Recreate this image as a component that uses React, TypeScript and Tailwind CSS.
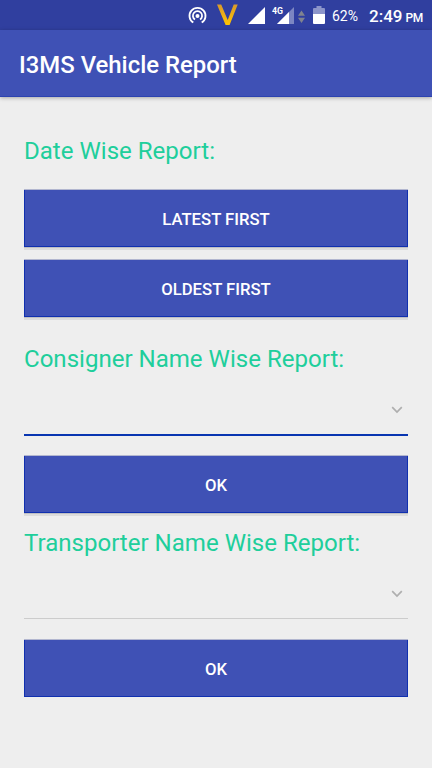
import type { ReactNode } from 'react'

function StatusBar() {
  return (
    <div className="flex h-[30px] items-center bg-[#303f9f] pl-[188px] text-white">
      <svg width="118" height="30" viewBox="188 0 118 30" className="shrink-0">
        {/* hotspot */}
        <g fill="none" stroke="#fff" strokeWidth="1.8">
          <path d="M193.3 22.6a8 8 0 1 1 8.4 0" />
          <path d="M195 19.6a4.6 4.6 0 1 1 5 0" />
        </g>
        <circle cx="197.5" cy="16" r="2" fill="#fff" />
        <defs>
          <linearGradient id="gold" x1="0" y1="0" x2="0" y2="1">
            <stop offset="0" stopColor="#d99a2b" />
            <stop offset="1" stopColor="#ffc400" />
          </linearGradient>
        </defs>
        <path d="M217 4.5h4.2l6.5 15.5 6-15.5h4L229.6 25h-4z" fill="url(#gold)" />
        {/* signal strength */}
        <path d="M265 7v17h-17z" fill="#fff" />
        <path d="M294 7v17h-17z" fill="#7c86c2" />
        <path d="M289 12v12h-12z" fill="#fff" />
        <text x="272" y="14.3" fill="#fff" fontSize="9.5" fontWeight="700" textLength="11" lengthAdjust="spacingAndGlyphs" fontFamily="Roboto, sans-serif">4G</text>
        <path d="M301.5 10.5l3.5 5.3h-7zM301.5 23l3.5-5.3h-7z" fill="#80838f" />
      </svg>
      <svg width="12" height="18" viewBox="0 0 12 18" className="ml-[7px] shrink-0">
        <path d="M3.5 0h5v2H11a1 1 0 0 1 1 1v5H0V3a1 1 0 0 1 1-1h2.5z" fill="#8c95ca" />
        <path d="M0 8h12v9a1 1 0 0 1-1 1H1a1 1 0 0 1-1-1z" fill="#fff" />
      </svg>
      <span className="ml-[7px] w-[37px] pt-0.5 text-[14px]">62%</span>
      <span className="whitespace-nowrap pt-0.5 text-[17px] font-medium leading-none">
        2:49<span className="ml-[3px] text-[12px] tracking-[-0.5px]">PM</span>
      </span>
    </div>
  )
}

function Heading({ children }: { children: ReactNode }) {
  return <h2 className="whitespace-nowrap text-[24.05px] leading-7 text-[#20ce9b]">{children}</h2>
}

function ReportButton({ label, flat }: { label: string; flat?: boolean }) {
  return (
    <button
      className={`block h-[57px] w-full border-x border-b border-[#1030af] bg-[#3f51b5] pt-[3px] text-[16.7px] font-medium text-white ${
        flat ? 'shadow-[0_-1px_0_#b2b6cf]' : 'shadow-[0_-1px_0_#b2b6cf,0_1px_0_#bfbfc3,0_3px_0_#dcdcdc]'
      }`}
    >
      {label}
    </button>
  )
}

function Select({ focused }: { focused?: boolean }) {
  return (
    <div
      className={`flex justify-end pr-[5px] pt-[33px] ${
        focused ? 'h-[63px] border-b-2 border-[#0835b1]' : 'h-[62px] border-b border-[#cccccc]'
      }`}
    >
      <svg width="12" height="8" viewBox="0 0 12 8" fill="none" stroke="#aeaeae" strokeWidth="1.7">
        <path d="M1.2 1.2L6 6l4.8-4.8" />
      </svg>
    </div>
  )
}

export default function App() {
  return (
    <div className="h-[768px] w-[432px] overflow-hidden bg-[#eeeeee] font-['Roboto',sans-serif]">
      <StatusBar />
      <header className="flex h-[67px] items-center border-b border-[#2c43b0] bg-[#3f51b5] px-5 pt-[5px] shadow-[0_1px_4px_rgba(0,0,0,0.3)]">
        <h1 className="-ml-px text-[23.9px] font-medium text-white">I3MS Vehicle Report</h1>
      </header>
      <main className="px-6 pt-10">
        <Heading>Date Wise Report:</Heading>
        <div className="mt-[25px] flex flex-col gap-[13px]">
          <ReportButton label="LATEST FIRST" />
          <ReportButton label="OLDEST FIRST" />
        </div>
        <section className="mt-7">
          <Heading>Consigner Name Wise Report:</Heading>
          <Select focused />
          <div className="mt-5">
            <ReportButton label="OK" />
          </div>
        </section>
        <section className="mt-4">
          <Heading>Transporter Name Wise Report:</Heading>
          <Select />
          <div className="mt-[21px]">
            <ReportButton label="OK" flat />
          </div>
        </section>
      </main>
    </div>
  )
}
